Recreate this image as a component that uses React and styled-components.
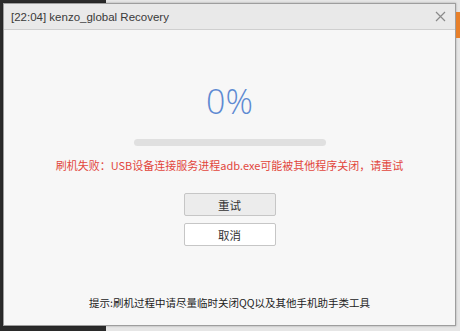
import React from "react";
import styled, { createGlobalStyle } from "styled-components";

const Global = createGlobalStyle`
  html, body { margin: 0; padding: 0; }
  body { width: 460px; height: 331px; overflow: hidden; font-family: "Noto Sans CJK SC", "Liberation Sans", sans-serif; }
`;

const Desktop = styled.div`
  position: relative;
  width: 460px;
  height: 331px;
  box-sizing: border-box;
  padding: 3px 4px 5px 3px;
  display: flex;
  background: linear-gradient(to right, #2b2b2b 106px, #e6e6e6 106px);
`;

const Accent = styled.div`
  position: absolute;
  right: 0;
  top: 12px;
  width: 4px;
  height: 26px;
  background: #e8802a;
`;

const Dialog = styled.div`
  flex: 1;
  display: flex;
  flex-direction: column;
  background: #f7f7f7;
  border: 1px solid #9e9e9e;
  box-shadow: 0 0 2px rgba(0,0,0,0.3);
`;

const TitleBar = styled.div`
  height: 25px;
  display: flex;
  align-items: center;
  justify-content: space-between;
  padding: 0 9px 0 7px;
  background: #e9e9e9;
  border-bottom: 1px solid #cfcfcf;
`;

const Title = styled.span`
  font-family: "Liberation Sans", sans-serif;
  font-size: 11.5px;
  color: #3a3a3a;
`;

const Close = styled.svg`
  width: 11px;
  height: 11px;
`;

const Body = styled.div`
  flex: 1;
  display: flex;
  flex-direction: column;
  align-items: center;
`;

const Percent = styled.div`
  margin-top: 51px;
  font-family: "Open Sans", "Liberation Sans", sans-serif;
  font-weight: 300;
  font-size: 34px;
  line-height: 40px;
  color: #5e8ad2;
`;

const Track = styled.div`
  margin-top: 18px;
  width: 192px;
  height: 7px;
  border-radius: 4px;
  background: #e0e0e0;
`;

const ErrorText = styled.div`
  margin-top: 11px;
  font-size: 11px;
  line-height: 16px;
  color: #e2463c;
`;

const Button = styled.button`
  width: 92px;
  height: 23px;
  margin-top: ${(p) => p.$mt}px;
  padding: 0;
  border: 1px solid #c6c6c6;
  border-radius: 2px;
  background: ${(p) => (p.$primary ? "#ececec" : "#ffffff")};
  font-family: "Noto Sans CJK SC", sans-serif;
  font-size: 11.5px;
  color: #333;
`;

const Hint = styled.div`
  margin-top: auto;
  margin-bottom: 14px;
  font-size: 10.5px;
  line-height: 16px;
  color: #222;
`;

export default function App() {
  return (
    <>
      <Global />
      <Desktop>
        <Accent />
        <Dialog>
          <TitleBar>
            <Title>[22:04] kenzo_global Recovery</Title>
            <Close viewBox="0 0 11 11">
              <path d="M1 1L10 10M10 1L1 10" stroke="#8a8a8a" strokeWidth="1.2" fill="none" />
            </Close>
          </TitleBar>
          <Body>
            <Percent>0%</Percent>
            <Track />
            <ErrorText>刷机失败：USB设备连接服务进程adb.exe可能被其他程序关闭，请重试</ErrorText>
            <Button $primary $mt={20}>重试</Button>
            <Button $mt={7}>取消</Button>
            <Hint>提示:刷机过程中请尽量临时关闭QQ以及其他手机助手类工具</Hint>
          </Body>
        </Dialog>
      </Desktop>
    </>
  );
}
